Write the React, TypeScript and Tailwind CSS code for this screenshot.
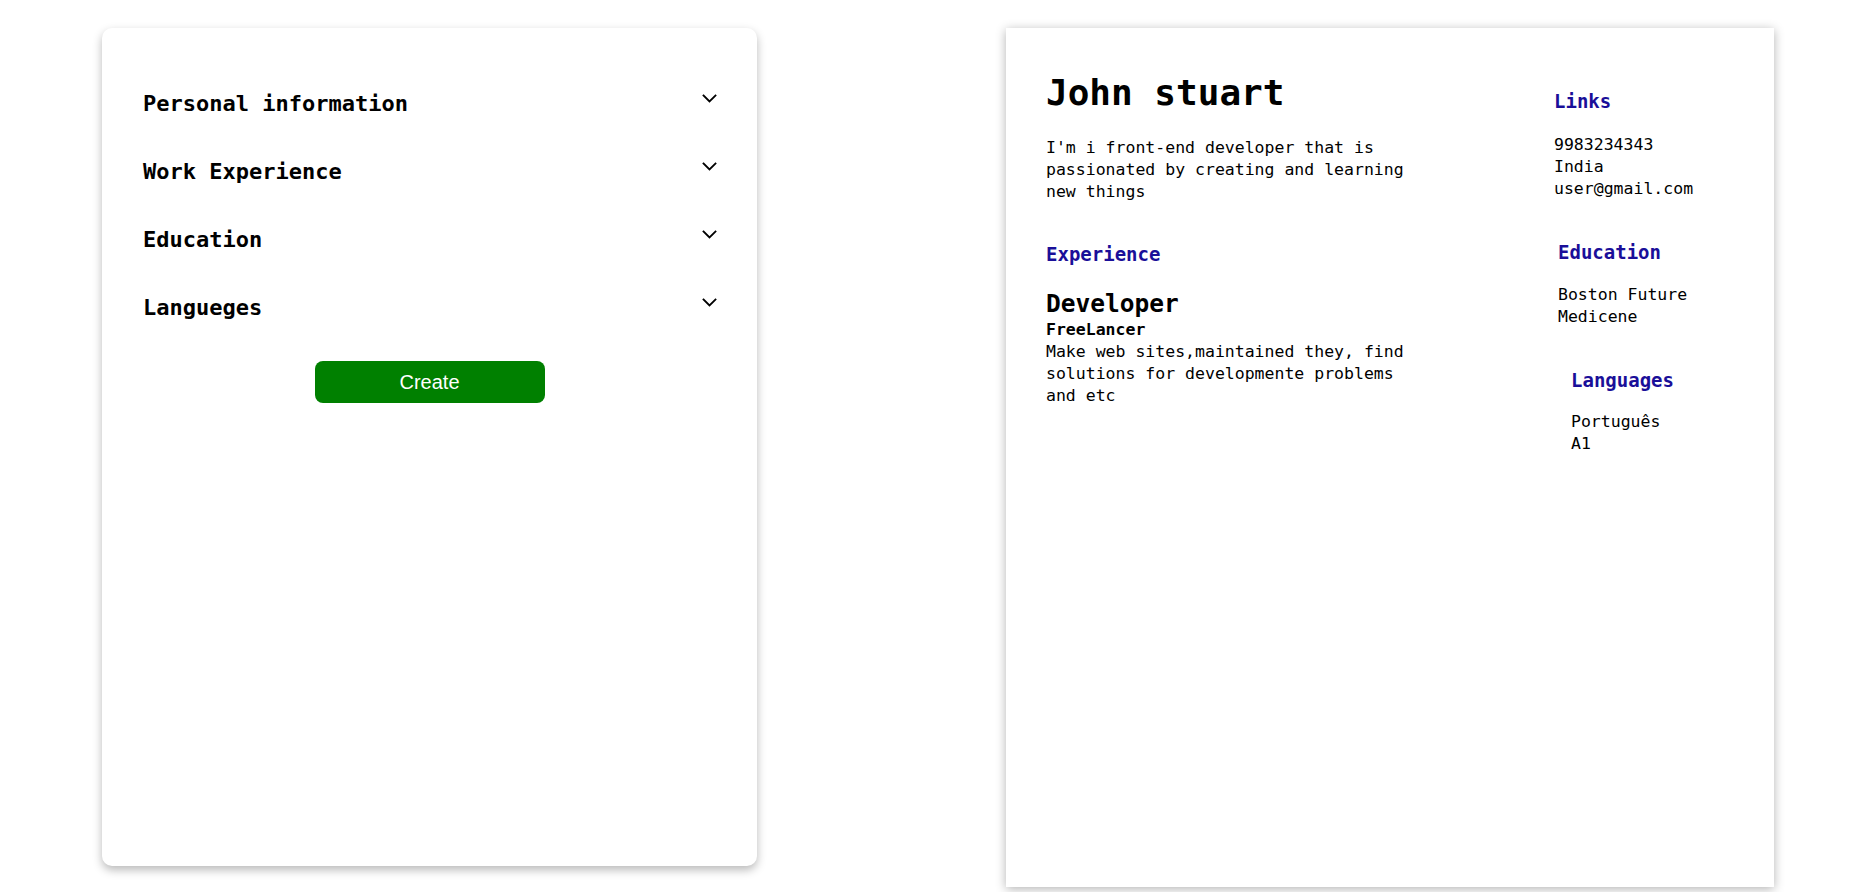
import React from "react";

const mono = "font-['DejaVu_Sans_Mono','Liberation_Mono',monospace]";

function Chevron() {
  return (
    <svg width="15" height="9" viewBox="0 0 15 9" className="mb-[12px]" fill="none">
      <polyline points="1.5,1.5 7.5,7.5 13.5,1.5" stroke="#000" strokeWidth="1.8" strokeLinecap="square" />
    </svg>
  );
}

function Row({ title }: { title: string }) {
  return (
    <div className="flex h-[68px] items-center justify-between">
      <h2 className={`${mono} text-[22px] font-bold leading-[28px] text-black`}>{title}</h2>
      <Chevron />
    </div>
  );
}

export default function App() {
  return (
    <div className="flex min-h-[892px] w-[1860px] items-start gap-[249px] bg-white pl-[102px] pt-[28px]">
      {/* Form card */}
      <div className="flex h-[838px] w-[655px] flex-col rounded-[10px] bg-white pl-[41px] pr-[40px] pt-[42px] shadow-[0_4px_10px_rgba(0,0,0,0.28)]">
        <Row title="Personal information" />
        <Row title="Work Experience" />
        <Row title="Education" />
        <Row title="Langueges" />
        <div className="mt-[19px] flex justify-center pr-px">
          <button className="h-[42px] w-[230px] rounded-[8px] bg-[#008000] font-['Liberation_Sans',Arial,sans-serif] text-[20px] text-white">
            Create
          </button>
        </div>
      </div>

      {/* Resume card */}
      <div className={`${mono} flex h-[859px] w-[768px] gap-[138px] bg-white pl-[40px] pt-[43px] text-black shadow-[0_2px_10px_rgba(0,0,0,0.3)]`}>
        <div className="flex w-[370px] flex-col">
          <h1 className="text-[36px] font-bold leading-[44px]">John stuart</h1>
          <p className="mt-[21.5px] text-[16.5px] leading-[22px]">
            I'm i front-end developer that is passionated by creating and learning new things
          </p>
          <h3 className="mt-[39.5px] text-[19px] font-bold leading-[24px] text-[#1a0f99]">Experience</h3>
          <h2 className="mt-[22px] text-[24.5px] font-bold leading-[31px]">Developer</h2>
          <h4 className="text-[16.5px] font-bold leading-[22px]">FreeLancer</h4>
          <p className="text-[16.5px] leading-[22px]">
            Make web sites,maintained they, find solutions for developmente problems and etc
          </p>
        </div>
        <div className="flex w-[160px] flex-col">
          <h3 className="mt-[18px] text-[19px] font-bold leading-[24px] text-[#1a0f99]">Links</h3>
          <div className="mt-[20.5px] text-[16.5px] leading-[22px]">
            <p>9983234343</p>
            <p>India</p>
            <p>user@gmail.com</p>
          </div>
          <div className="ml-[4px]">
            <h3 className="mt-[40px] text-[19px] font-bold leading-[24px] text-[#1a0f99]">Education</h3>
            <p className="mt-[20px] text-[16.5px] leading-[22px]">Boston Future Medicene</p>
          </div>
          <div className="ml-[17px]">
            <h3 className="mt-[40px] text-[19px] font-bold leading-[24px] text-[#1a0f99]">Languages</h3>
            <div className="mt-[19.5px] text-[16.5px] leading-[22px]">
              <p>Português</p>
              <p>A1</p>
            </div>
          </div>
        </div>
      </div>
    </div>
  );
}
